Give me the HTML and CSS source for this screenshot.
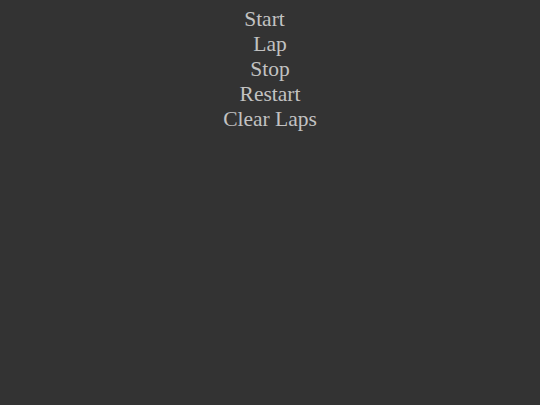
FILE: index.html
```html
<!DOCTYPE html>
<html lang="en">
<head>
    <meta charset="UTF-8">
    <title>Stopwatch</title>
    <link rel="stylesheet" href="styles.css">
</head>
<body>
    <div class="controls">
        <button class="ctl start">Start</button>
        <button class="ctl">Lap</button>
        <button class="ctl">Stop</button>
        <button class="ctl">Restart</button>
        <button class="ctl">Clear Laps</button>
    </div>
</body>
</html>
```

FILE: styles.css
```css
body {
    margin: 0;
    background-color: #333333;
    font-family: 'Liberation Serif', serif;
}

.controls {
    display: flex;
    flex-direction: column;
    align-items: center;
    padding-top: 7px;
}

.ctl {
    background: none;
    border: none;
    padding: 0;
    color: #c2c2c2;
    font-family: 'Liberation Serif', serif;
    font-size: 21.5px;
    line-height: 25px;
}

.start {
    margin-right: 11px;
}
```
